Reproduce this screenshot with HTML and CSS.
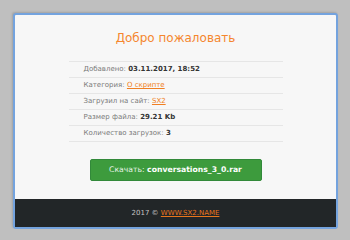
FILE: index.html
```html
<!DOCTYPE html>
<html lang="ru">
<head>
    <meta charset="UTF-8">
    <title>Добро пожаловать</title>
    <link rel="stylesheet" href="styles.css">
</head>
<body>

<div id="download-box">
    <h2 class="title">Добро пожаловать</h2>

    <ul class="file-info">
        <li>Добавлено: <b>03.11.2017, 18:52</b></li>
        <li>Категория: <a href="#">О скрипте</a></li>
        <li>Загрузил на сайт: <a href="#">SX2</a></li>
        <li>Размер файла: <b>29.21 Kb</b></li>
        <li>Количество загрузок: <b>3</b></li>
    </ul>

    <div class="button-row">
        <a class="download-btn" href="#">Скачать: <b>conversations_3_0.rar</b></a>
    </div>

    <div class="footer">
        2017 © <a href="#">WWW.SX2.NAME</a>
    </div>
</div>

</body>
</html>
```

FILE: styles.css
```css
body {
    font-family: 'DejaVu Sans', Verdana, sans-serif;
    background: #bfbfbf;
    margin: 0;
    padding: 13px 12px 0 13px;
}

#download-box {
    width: 321px;
    background: #f7f7f7;
    border: 2px solid #74a3de;
    border-radius: 3px;
    box-shadow: -1px -1px 2px rgba(0, 0, 0, 0.15);
}

.title {
    margin: 0;
    height: 46px;
    line-height: 46px;
    text-align: center;
    font-size: 12px;
    font-weight: normal;
    color: #f5862e;
}

.file-info {
    list-style: none;
    margin: 0 auto;
    padding: 0;
    width: 214px;
    border-bottom: 1px solid #e6e6e6;
}

.file-info li {
    height: 15px;
    line-height: 15px;
    border-top: 1px solid #e6e6e6;
    padding-left: 15px;
    font-size: 7px;
    color: #7a7a7a;
}

.file-info b {
    color: #333;
}

.file-info a {
    color: #f07f22;
}

.button-row {
    display: flex;
    justify-content: center;
    padding: 17px 0 18px;
}

.download-btn {
    width: 170px;
    height: 20px;
    line-height: 20px;
    text-align: center;
    background: #3d9b3d;
    border: 1px solid #32893a;
    border-radius: 2px;
    color: #e6f3e6;
    font-size: 7.7px;
    text-decoration: none;
}

.download-btn b {
    color: #fff;
}

.footer {
    height: 28px;
    line-height: 28px;
    background: #222628;
    text-align: center;
    font-size: 7px;
    color: #c4c4c4;
}

.footer a {
    color: #e8761c;
}
```
